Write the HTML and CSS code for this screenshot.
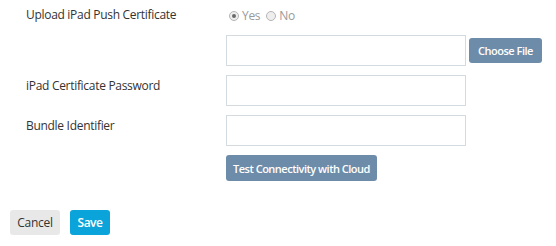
FILE: index.html
```html
<!DOCTYPE html>
<html lang="en">
<head>
    <meta charset="UTF-8">
    <meta name="viewport" content="width=device-width, initial-scale=1.0">
    <title>iPad Push Settings</title>
    <link rel="stylesheet" href="styles.css">
</head>
<body>
    <form class="settings-form">
        <div class="form-row radio-row">
            <label class="form-label">Upload iPad Push Certificate</label>
            <div class="form-control radio-group">
                <label class="radio-option"><span class="radio checked"></span>Yes</label>
                <label class="radio-option"><span class="radio"></span>No</label>
            </div>
        </div>
        <div class="form-row">
            <span class="form-label"></span>
            <div class="form-control">
                <input type="text" class="text-input">
                <button type="button" class="btn btn-slate">Choose File</button>
            </div>
        </div>
        <div class="form-row">
            <label class="form-label">iPad Certificate Password</label>
            <div class="form-control">
                <input type="password" class="text-input">
            </div>
        </div>
        <div class="form-row">
            <label class="form-label">Bundle Identifier</label>
            <div class="form-control">
                <input type="text" class="text-input">
            </div>
        </div>
        <div class="form-row">
            <span class="form-label"></span>
            <div class="form-control">
                <button type="button" class="btn btn-slate btn-wide">Test Connectivity with Cloud</button>
            </div>
        </div>

        <div class="form-actions">
            <button type="button" class="btn btn-light">Cancel</button>
            <button type="submit" class="btn btn-primary">Save</button>
        </div>
    </form>
</body>
</html>
```

FILE: styles.css
```css
/* Global Settings */
* {
    box-sizing: border-box;
    margin: 0;
    padding: 0;
    font-family: 'Open Sans', 'Noto Sans', sans-serif;
}

body {
    background-color: #fff;
    color: #333;
    font-size: 12px;
}

.settings-form {
    padding: 4px 0 0 10px;
}

.form-row {
    display: flex;
    align-items: flex-start;
    margin-bottom: 9px;
    padding-left: 16px;
}

.radio-row {
    min-height: 22px;
}

.form-label {
    width: 200px;
    flex-shrink: 0;
    padding-top: 2px;
    line-height: 17px;
    letter-spacing: -0.3px;
    color: #333;
}

.form-control {
    display: flex;
    align-items: center;
    gap: 3px;
}

/* Radio */
.radio-group {
    gap: 6px;
    padding-top: 3px;
    padding-left: 3px;
    color: #9a9a9a;
    line-height: 17px;
}

.radio-option {
    display: flex;
    align-items: center;
    letter-spacing: -0.3px;
}

.radio {
    width: 10px;
    height: 10px;
    border: 1px solid #b5b5b5;
    border-radius: 50%;
    background-color: #eee;
    margin-right: 3px;
    position: relative;
}

.radio.checked::after {
    content: "";
    position: absolute;
    left: 2px;
    top: 2px;
    width: 4px;
    height: 4px;
    border-radius: 50%;
    background-color: #6a6a6a;
}

/* Inputs */
.text-input {
    width: 240px;
    height: 31px;
    border: 1px solid #d3dbe1;
    background-color: #fff;
    outline: none;
    padding: 4px 8px;
}

/* Buttons */
.btn {
    border: none;
    border-radius: 3px;
    font-size: 11px;
    font-weight: 600;
    letter-spacing: -0.5px;
    height: 25px;
    padding: 0;
    white-space: nowrap;
    text-align: center;
    cursor: pointer;
}

.btn-slate {
    background-color: #6d8ca9;
    color: #fff;
    width: 73px;
}

.btn-wide {
    width: 151px;
    height: 26px;
}

.btn-light {
    background-color: #e8e8e8;
    color: #333;
    font-size: 12px;
    font-weight: 400;
    letter-spacing: -0.3px;
    width: 50px;
}

.btn-primary {
    background-color: #0ba4da;
    color: #fff;
    font-size: 12px;
    width: 40px;
}

.form-actions {
    display: flex;
    gap: 10px;
    margin-top: 29px;
}
```
